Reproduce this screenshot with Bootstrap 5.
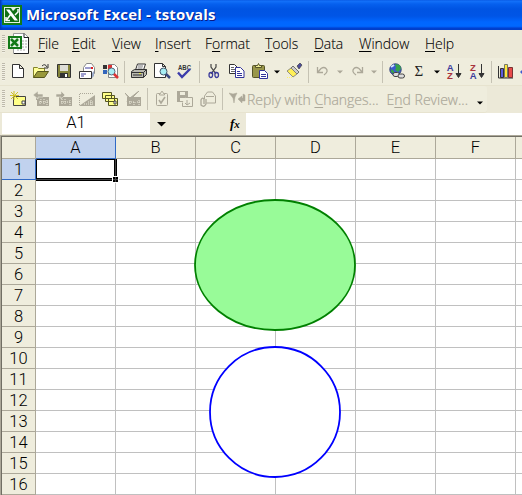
<!DOCTYPE html>
<html lang="en">
<head>
<meta charset="utf-8">
<title>Microsoft Excel - tstovals</title>
<link href="https://cdn.jsdelivr.net/npm/bootstrap@5.3.0/dist/css/bootstrap.min.css" rel="stylesheet">
<style>
body{width:522px;height:495px;background:#ece9d8;color:#000;font-family:"Open Sans","Liberation Sans",sans-serif}
svg{display:block;flex:none}
.titlebar{height:30px;padding-left:2px;background:linear-gradient(90deg,#0038b8 0,#0038b800 3px),linear-gradient(#0755e0 0,#1472fa 1px,#0660ee 4px,#0054e3 9px,#0055e6 16px,#0066ff 22px,#0068ff 26px,#005cf4 27px,#0040cf 28px,#003dc8 30px)}
.titletext{font:700 15px/30px "Open Sans",sans-serif;color:#fff;text-shadow:1px 1px 0 #0a1883;margin-left:4px;letter-spacing:.15px;position:relative;top:-1px}
.menubar{height:28px}
.grip{width:3px;height:18px;margin:0 1px 0 2px;background:repeating-linear-gradient(#bdb9aa 0 1px,#f3f1e6 1px 2px)}
.menubar .nav-item{font-size:14px;line-height:28px;font-weight:300;margin-right:16px;-webkit-text-stroke:.1px #000;white-space:nowrap;letter-spacing:-.05px}
.nav-item:nth-child(1){width:18px}.nav-item:nth-child(2){width:24px}.nav-item:nth-child(3){width:27px}
.nav-item:nth-child(4){width:34px}.nav-item:nth-child(5){width:44px}.nav-item:nth-child(6){width:33px}
.nav-item:nth-child(7){width:29px}.nav-item:nth-child(8){width:50px}
u{text-underline-offset:2px;text-decoration-thickness:1px}
.tools{background:#efeddd;border-bottom:1px solid #e7e3cf;height:28px}
.tools.second{height:27px;width:487px;border-radius:0 3px 3px 0}
.tb{width:23px;padding-left:4px;flex:none}
.dd{width:11px;padding-left:3px;flex:none}
.vr-line{width:1px;height:22px;margin:0 2px 0 3px;background:#c5c2b3;flex:none}
.greytext{font-weight:300;font-size:14px;color:#aca899;-webkit-text-stroke:.2px #aca899;white-space:nowrap}
.reply{margin-left:-1px}
.formula{height:22px}
.namebox{width:148px;height:21px;margin-left:2px;background:#fff}
.fxlabel{font:italic 700 13px/22px "Liberation Serif",serif;width:82px;padding-left:66px;letter-spacing:0;white-space:nowrap}
.fxlabel small{font-size:11px}
.headface,.namebox{font-family:Roboto,"Liberation Sans",Arial,sans-serif;font-weight:300;font-size:16.5px}
.sheet{border-top:1px solid #aca899;border-left:1px solid #aca899;height:360px}
.sheet-inner{border-top:1px solid #716f64;border-left:1px solid #716f64;width:521px;height:359px;background:#fff;display:grid;grid-template-columns:34px repeat(6,80px) 1fr;grid-template-rows:22px;grid-auto-rows:21px}
.headface{background:#efeddd;border-right:1px solid #aca899;border-bottom:1px solid #aca899;line-height:22px;text-align:center}
.headface.active{background:#c1d2ee;border-color:#316ac5}
.headface:nth-child(8){border-right:0}
.sq{border-right:1px solid #c0c0c0;border-bottom:1px solid #c0c0c0}
.sq:nth-child(8n){border-right:0}
.drawings{left:0;top:0;pointer-events:none}
.az{font:700 9.500px "Liberation Sans",sans-serif}
</style>
<script src="https://cdn.jsdelivr.net/npm/bootstrap@5.3.0/dist/js/bootstrap.bundle.min.js"></script>
</head>
<body class="position-relative overflow-hidden m-0">
<header class="titlebar d-flex align-items-center">
<svg width="20" height="20" viewBox="0 0 20 20"><path fill="#137a18" d="M0 0h20v20H0z"/><path fill="#e6f2e6" d="M2 2h16v16H2z"/><path fill="#117015" d="M3 3h6l2 3 3-3h3v14H3z"/><path d="M4 4.500h3.500L16 15.500h-3.500z" fill="#fff"/><path d="M16 4v3l-3 3M4 12v3.500h4" fill="none" stroke="#fff" stroke-width="1.500"/><path d="M9 9l-4.500 6" stroke="#fff" stroke-width="1.600"/></svg>
<span class="titletext">Microsoft Excel - tstovals</span>
</header>

<nav class="menubar d-flex align-items-center">
<span class="grip"></span>
<svg class="me-2" width="24" height="22" viewBox="-2 0 24 22"><path fill="#fff" stroke="#999" d="M5.500 .5h11l4 4v16h-15z"/><path d="M20.500 4v16.500H6M16 .5v4h4" fill="none" stroke="#222"/><path d="M14 8h5M14 11h5M9 17h9M14 14h5" stroke="#aaa" stroke-dasharray="2 1"/><path fill="#137a18" d="M0 3h14v13H0z"/><path fill="#e8f5e8" d="M2 5h10v9H2z"/><path d="m3 6 7 7M10 6l-7 7" stroke="#137a18" stroke-width="2.500"/></svg>
<div class="d-flex">
<span class="nav-item"><u>F</u>ile</span><span class="nav-item"><u>E</u>dit</span><span class="nav-item"><u>V</u>iew</span><span class="nav-item"><u>I</u>nsert</span><span class="nav-item">F<u>o</u>rmat</span><span class="nav-item"><u>T</u>ools</span><span class="nav-item"><u>D</u>ata</span><span class="nav-item"><u>W</u>indow</span><span class="nav-item"><u>H</u>elp</span>
</div>
</nav>

<div class="tools d-flex align-items-center overflow-hidden">
<span class="grip"></span>
<span class="tb"><svg width="17" height="17"><path d="M2.500 1.500h7l4 4v9h-11zM9.500 1.500v4h4" fill="#fff" stroke="#333"/></svg></span>
<span class="tb"><svg width="17" height="17"><path d="M.5 14.500v-10h4l1 1h6v4" fill="#ff9" stroke="#84842a"/><path d="M.5 14.500l4-6h11l-4 6z" fill="#99993a" stroke="#55551c"/><path d="M9 3q3-3 5 1M15 1v4h-4" fill="none" stroke="#333"/></svg></span>
<span class="tb"><svg width="17" height="17"><path d="M1.500 1.500h13v13h-12l-1-1z" fill="#84843a" stroke="#333"/><path d="M4 2h8v6H4z" fill="#deded8"/><path d="M4 10h8v4H4z" fill="#333"/><path d="M9 11h2v3H9z" fill="#fff"/></svg></span>
<span class="tb"><svg width="17" height="17"><path d="M4.500 9V4.500l3-4h5l3 4v6h-4" fill="#fff" stroke="#888"/><path d="M6 5h6" stroke="#3c3c9c"/><path d="M12 4h2v2h-2z" fill="#d22"/><path d="M.5 8.500h12v7H.5z" fill="#fff" stroke="#333"/><path d="M2 11h5M2 13h3" stroke="#3c3c9c"/><path d="M13 10l2-2v5l-2 2z" fill="#9aa9c8"/></svg></span>
<span class="tb"><svg width="17" height="17"><path d="M6.500 1.500h6l3 3v10h-9z" fill="#fff" stroke="#888"/><path d="M1 2h4v4H1z" fill="#333"/><path d="M6 2h4v4H6z" fill="#d33"/><path d="M1 7h4v4H1z" fill="#36b"/><path d="M6 7h3v3H6z" fill="#dc3"/><circle cx="9.500" cy="8.500" r="3.500" fill="#a7eef4" stroke="#567"/><path d="m12 11 4 4" stroke="#d33" stroke-width="2.500"/></svg></span>
<span class="vr-line"></span>
<span class="tb"><svg width="17" height="17"><path d="M4.500 7l2-6h8l-2 6z" fill="#fff" stroke="#333"/><path d="M7 3h5M6.500 5h5" stroke="#777"/><path d="M.5 8.500l3-2h12v5l-3 3H.5z" fill="#b9b9b0" stroke="#333"/><path d="M1 9.500h11.500l3-3M12.500 9.500v5M2 12h9" fill="none" stroke="#333"/><path d="M8 10h2v1H8z" fill="#ee3"/></svg></span>
<span class="tb"><svg width="17" height="17"><path d="M.5 .5h8l3 3v11H.5zM8.500 .5v3h3" fill="#fff" stroke="#333"/><circle cx="9.500" cy="8.500" r="3.500" fill="#a7eef4" stroke="#456"/><path d="m12 11 4 4" stroke="#3a4a80" stroke-width="2.500"/></svg></span>
<span class="tb"><svg width="17" height="17"><text x="1" y="6.500" textLength="13" lengthAdjust="spacingAndGlyphs" font-family="Liberation Sans" font-size="7" font-weight="700" fill="#333">ABC</text><path d="M1 9.500l4 4.500 8-8" fill="none" stroke="#3c3cab" stroke-width="2.400"/></svg></span>
<span class="vr-line"></span>
<span class="tb"><svg width="17" height="17"><path d="M5 1v3l5 7M10 1v3l-5 7" fill="none" stroke="#444" stroke-width="1.200"/><path d="M5 9.500q-2 0-2 2.500t2 2.500 1.500-5zM10.500 9.500q2 0 2 2.500t-2 2.500-1.500-5z" fill="none" stroke="#3c3c9c" stroke-width="1.300"/></svg></span>
<span class="tb"><svg width="17" height="17"><path d="M.5 1.500h5l3 3v6h-8z" fill="#fff" stroke="#333"/><path d="M2 4.500h3M2 6.500h5M2 8.500h5" stroke="#666"/><path d="M6.500 4.500h5l3.500 3.500v6.500H6.500z" fill="#fff" stroke="#33339a"/><path d="M8 8.500h3M8 10.500h5M8 12.500h5" stroke="#33339a"/></svg></span>
<span class="tb"><svg width="17" height="17"><rect x=".5" y="2.500" width="12" height="12" rx="1" fill="#98964a" stroke="#55532a"/><path d="M3.500 4.500v-2h2l1-2 1 2h2v2z" fill="#ee9" stroke="#55532a"/><path d="M7.500 7.500h5l3 3v5h-8z" fill="#fff" stroke="#33339a"/><path d="M9 11.500h5M9 13.500h5" stroke="#33339a"/></svg></span>
<span class="dd"><svg width="6" height="4"><path d="M0 .5h6l-3 3z"/></svg></span>
<span class="tb"><svg width="17" height="17"><path d="M11 3l3-3 2 2-3 4z" fill="#4c4c9a" stroke="#333" stroke-width=".6"/><path d="M7 3l6 6-2 2-6-6z" fill="#ccc" stroke="#555" stroke-width=".8"/><path d="M5 5l6 6-4 3-6-6z" fill="#ffef55" stroke="#777" stroke-width=".8"/><path d="m3 7 5 5M1 14.500h6" stroke="#fff36a" stroke-dasharray="1 1"/></svg></span>
<span class="vr-line"></span>
<span class="tb"><svg width="17" height="17"><path d="M2.500 4v5.500H8M3 9l3-3.500q3-2 5 0 3 3-2 6.500" fill="none" stroke="#aca899" stroke-width="1.300"/></svg></span>
<span class="dd"><svg width="6" height="4"><path fill="#aca899" d="M0 .5h6l-3 3z"/></svg></span>
<span class="tb"><svg width="17" height="17"><path d="M13.500 4v5.500H8M13 9l-3-3.500q-3-2-5 0-3 3 2 6.500" fill="none" stroke="#aca899" stroke-width="1.300"/></svg></span>
<span class="dd"><svg width="6" height="4"><path fill="#aca899" d="M0 .5h6l-3 3z"/></svg></span>
<span class="vr-line"></span>
<span class="tb"><svg width="17" height="17"><circle cx="6.500" cy="6.500" r="5.700" fill="#3c59d0" stroke="#33407a"/><path d="M6 1l5 1 1 4-3 3-3-2 1-2zM2 6l3 2v3l-3-2z" fill="#36a34a"/><path d="M2 4l3-2" stroke="#cfe4ff" stroke-width="2"/><rect x="4" y="9.500" width="6.500" height="4" rx="2" fill="#ddd" stroke="#444"/><rect x="9" y="11" width="6.500" height="4" rx="2" fill="#ddd" stroke="#444"/></svg></span>
<span class="tb"><svg width="17" height="17"><text x="2.500" y="13" font-family="Liberation Serif" font-size="15" fill="#222">Σ</text></svg></span>
<span class="dd"><svg width="6" height="4"><path d="M0 .5h6l-3 3z"/></svg></span>
<span class="tb"><svg width="17" height="17"><text class="az" x=".8" y="7.500" fill="#3c3c9c">A</text><text class="az" x="1" y="15.500" fill="#a8323c">Z</text><path d="M12.500 1v13M10 10.500l2.500 4 2.500-4z" stroke="#333" fill="#333"/></svg></span>
<span class="tb"><svg width="17" height="17"><text class="az" x="1" y="7.500" fill="#a8323c">Z</text><text class="az" x=".8" y="15.500" fill="#3c3c9c">A</text><path d="M12.500 1v13M10 10.500l2.500 4 2.500-4z" stroke="#333" fill="#333"/></svg></span>
<span class="vr-line"></span>
<span class="tb"><svg width="17" height="17"><path d="M.5 3v12H15" fill="none" stroke="#333"/><path d="M2.500 5.500h3v9h-3z" fill="#5c5ce0" stroke="#333"/><path d="M6.500 1.500h3v13h-3z" fill="#ffe83a" stroke="#776"/><path d="M10.500 4.500h4v10h-4z" fill="#e84a4a" stroke="#733"/></svg></span>
<svg width="5" height="17"><path d="M3 9l2-2v4z" fill="#3c59d0"/></svg>
</div>

<div class="tools second d-flex align-items-center">
<span class="grip"></span>
<span class="tb"><svg width="17" height="17"><path d="M3.500 5.500h12v9h-12z" fill="#ff8" stroke="#444"/><path d="M12 10h3v3h-3z" fill="#fff" stroke="#444"/><path d="M4 0v9M0 4.500h9M1 1l7 7M8 1l-7 7" stroke="#cfc12a"/></svg></span>
<span class="tb"><svg width="17" height="17"><path d="M3 6h13v9H4V9H3z" fill="#aca899"/><path d="M8 8l-1 5M11 8v5M14 9v5M6 11h9" stroke="#efeddd" stroke-dasharray="1 1"/><path d="M0 4l5-4v3h5v3H5v2z" fill="#aca899" stroke="#efeddd" stroke-width=".6"/></svg></span>
<span class="tb"><svg width="17" height="17"><path d="M3 6h13v9H3z" fill="#aca899"/><path d="M6 8v5M9 8v5M14 9v5M5 11h10" stroke="#efeddd" stroke-dasharray="1 1"/><path d="M9 4L5 0v3H0v3h5v2z" fill="#aca899" stroke="#efeddd" stroke-width=".6"/></svg></span>
<span class="tb"><svg width="17" height="17"><path d="M.5 14V2.500H15" fill="none" stroke="#aca899" stroke-dasharray="1 1"/><path d="M0 15L16 4v11z" fill="#aca899"/><path d="M5 13h10M9 11h6M12 9v5" stroke="#efeddd" stroke-dasharray="1 1"/></svg></span>
<span class="tb"><svg width="17" height="17"><path d="M.5 1.500h9v6h-9zM3.500 4.500h9v6h-9zM6.500 7.500h9v7h-9z" fill="#ff8" stroke="#555522"/><path d="M12 10h2v3h-2z" fill="#fff" stroke="#444"/></svg></span>
<span class="tb"><svg width="17" height="17"><path d="M2 6h14v9H2z" fill="#aca899"/><path d="M5 8v5M9 9v5M14 9v5M4 11h11" stroke="#efeddd" stroke-dasharray="1 1"/><path d="M0 2l5 5 9-7-7 7 4 4-5-3-4 3 2-4z" fill="#aca899" stroke="#aca899"/></svg></span>
<span class="vr-line"></span>
<span class="tb"><svg width="17" height="17"><rect x="2.500" y="2.500" width="11" height="12" rx="1" fill="none" stroke="#aca899"/><path d="M5.500 4V2.500h1l1-2h1l1 2h1V4z" fill="#efeddd" stroke="#aca899"/><path d="m5 9 2 3 4-6" fill="none" stroke="#aca899" stroke-width="1.600"/></svg></span>
<span class="tb"><svg width="17" height="17"><path d="M0 0h11v11H0z" fill="#aca899"/><path d="M3 1h5v3H3zM3 7h5v3H3z" fill="#efeddd"/><path d="M8.500 6.500h7v9h-10v-4" fill="#efeddd" stroke="#aca899"/><path d="M10 9v5M8 12l2 2 3-2" fill="none" stroke="#aca899"/></svg></span>
<span class="tb"><svg width="17" height="17"><path d="M4.500 8V5l3-4h5l3 4v7h-9" fill="none" stroke="#aca899"/><path d="M6 5.500h8" stroke="#aca899"/><path d="M6 8v5q-2 4-5 1V9q1-3 3-1v5" fill="none" stroke="#aca899" stroke-width="1.300"/></svg></span>
<span class="vr-line"></span>
<span class="tb"><svg width="17" height="17"><path d="M0 2l4 1 4-1-2 4-1 6-1-5zM16 4v6h-3v2l-4-4 4-3v2h1V3z" fill="#aca899" stroke="#aca899" stroke-width=".5"/></svg></span>
<span class="greytext reply">Reply with <u>C</u>hanges...</span>
<span class="greytext endrev ms-2">E<u>n</u>d Review...</span>
<svg class="ms-auto me-1 mt-2" width="6" height="4"><path d="M0 .5h6l-3 3z"/></svg>
</div>

<div class="formula d-flex">
<span class="namebox d-flex align-items-center justify-content-center">A1</span>
<svg class="ms-2 mt-2" width="6" height="14" overflow="visible"><path d="M-1 1h9l-4.500 4.500z"/></svg>
<span class="fxlabel">f<small>x</small></span>
<span class="bg-white flex-fill"></span>
</div>

<main class="sheet"><div class="sheet-inner" id="cells"></div></main>

<svg class="drawings position-absolute" width="522" height="495">
<path d="M36.500 180V159.500H115" fill="none" stroke="#000"/><path d="M36 179.500h76M115.500 159v17" stroke="#000" stroke-width="3"/><path d="M36 179.500h76M115.500 159v17" stroke="#444"/>
<path d="M112 176h7v7h-7z" fill="#fff"/><path d="M113 177h5v5h-5z"/><path d="M113 179.500h5M115.500 177v5" stroke="#444"/>
<ellipse cx="275" cy="265" rx="80" ry="65" fill="#98fb98" stroke="#008000" stroke-width="1.800"/>
<circle cx="275" cy="412" r="65" fill="#fff" stroke="#0000ff" stroke-width="1.800"/>
</svg>
<script>
const cells = document.getElementById('cells');
const add = (cls, text = '') => {
  const d = document.createElement('div');
  d.className = cls;
  d.textContent = text;
  cells.append(d);
};
add('headface corner');
['A', 'B', 'C', 'D', 'E', 'F', ''].forEach((c, i) => add('headface' + (i ? '' : ' active'), c));
for (let r = 1; r <= 16; r++) {
  add('headface' + (r === 1 ? ' active' : ''), r);
  for (let c = 0; c < 7; c++) add('sq');
}
</script>
</body>
</html>
